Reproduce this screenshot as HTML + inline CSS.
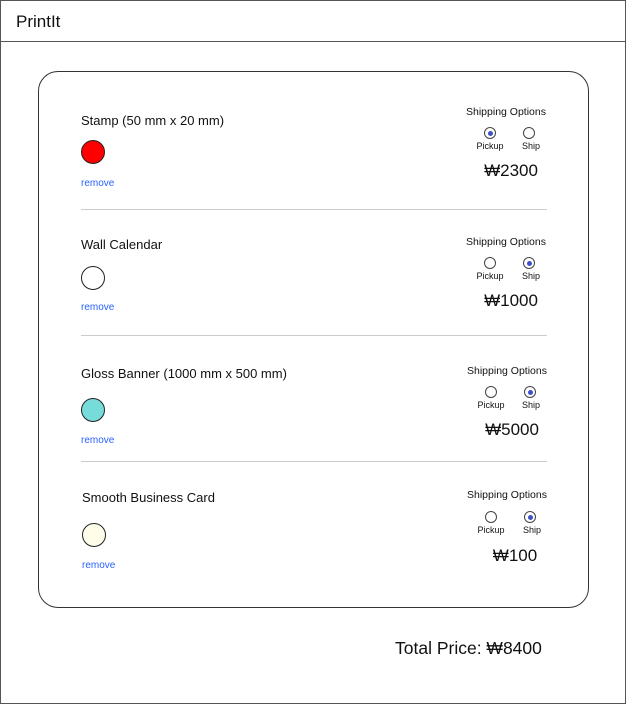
<!DOCTYPE html>
<html><head><meta charset="utf-8"><style>
*{margin:0;padding:0;box-sizing:border-box}
body{width:626px;height:704px;position:relative;background:#fff;font-family:"Liberation Sans","Noto Sans CJK KR",sans-serif;color:#111;overflow:hidden}
.a{position:absolute;white-space:nowrap;line-height:1}
.frame{position:absolute;left:0;top:0;width:626px;height:704px;border:1px solid #555}
.hline{position:absolute;left:0;top:41px;width:626px;height:1px;background:#555}
.card{position:absolute;left:38px;top:71px;width:551px;height:537px;border:1px solid #333;border-radius:20px}
.dot{position:absolute;width:24px;height:24px;border-radius:50%;border:1px solid #222}
.rm{position:absolute;font-size:10px;color:#2962ff;line-height:1}
.div{position:absolute;left:81px;width:466px;height:1px;background:#ccc}
.r{position:absolute;width:12px;height:12px;border-radius:50%;border:1px solid #444;background:#fff}
.r.on::after{content:"";position:absolute;left:2.5px;top:2.5px;width:5px;height:5px;border-radius:50%;background:#3f4fc8}
.lb{position:absolute;font-size:9px;line-height:1;transform:translateX(-50%)}
.so{position:absolute;font-size:10.5px;line-height:1}
.pr{position:absolute;font-size:17px;line-height:1;transform:translateX(-50%)}
.t{position:absolute;font-size:13px;line-height:1}
</style></head><body>
<div class="frame"></div>
<div class="a" style="left:16px;top:13px;font-size:17px">PrintIt</div>
<div class="hline"></div>
<div class="card"></div>

<!-- item 1 -->
<div class="t" style="left:81px;top:114px">Stamp (50 mm x 20 mm)</div>
<div class="dot" style="left:81px;top:140px;background:#f00"></div>
<div class="rm" style="left:81px;top:179px">remove</div>
<div class="so" style="left:466px;top:107px">Shipping Options</div>
<div class="r on" style="left:484px;top:127px"></div>
<div class="r" style="left:523px;top:127px"></div>
<div class="lb" style="left:490px;top:142px">Pickup</div>
<div class="lb" style="left:531px;top:142px">Ship</div>
<div class="pr" style="left:511px;top:162px">₩2300</div>
<div class="div" style="top:209px"></div>

<!-- item 2 -->
<div class="t" style="left:81px;top:238px">Wall Calendar</div>
<div class="dot" style="left:81px;top:266px;background:#fff"></div>
<div class="rm" style="left:81px;top:303px">remove</div>
<div class="so" style="left:466px;top:237px">Shipping Options</div>
<div class="r" style="left:484px;top:257px"></div>
<div class="r on" style="left:523px;top:257px"></div>
<div class="lb" style="left:490px;top:272px">Pickup</div>
<div class="lb" style="left:531px;top:272px">Ship</div>
<div class="pr" style="left:511px;top:292px">₩1000</div>
<div class="div" style="top:335px"></div>

<!-- item 3 -->
<div class="t" style="left:81px;top:367px">Gloss Banner (1000 mm x 500 mm)</div>
<div class="dot" style="left:81px;top:398px;background:#76dcd9"></div>
<div class="rm" style="left:81px;top:436px">remove</div>
<div class="so" style="left:467px;top:366px">Shipping Options</div>
<div class="r" style="left:485px;top:386px"></div>
<div class="r on" style="left:524px;top:386px"></div>
<div class="lb" style="left:491px;top:401px">Pickup</div>
<div class="lb" style="left:531px;top:401px">Ship</div>
<div class="pr" style="left:512px;top:421px">₩5000</div>
<div class="div" style="top:461px"></div>

<!-- item 4 -->
<div class="t" style="left:82px;top:491px">Smooth Business Card</div>
<div class="dot" style="left:82px;top:523px;background:#fdfde9"></div>
<div class="rm" style="left:82px;top:561px">remove</div>
<div class="so" style="left:467px;top:490px">Shipping Options</div>
<div class="r" style="left:485px;top:511px"></div>
<div class="r on" style="left:524px;top:511px"></div>
<div class="lb" style="left:491px;top:526px">Pickup</div>
<div class="lb" style="left:532px;top:526px">Ship</div>
<div class="pr" style="left:515px;top:547px">₩100</div>

<div class="a" style="left:395px;top:640px;font-size:17.5px">Total Price: ₩8400</div>
</body></html>
